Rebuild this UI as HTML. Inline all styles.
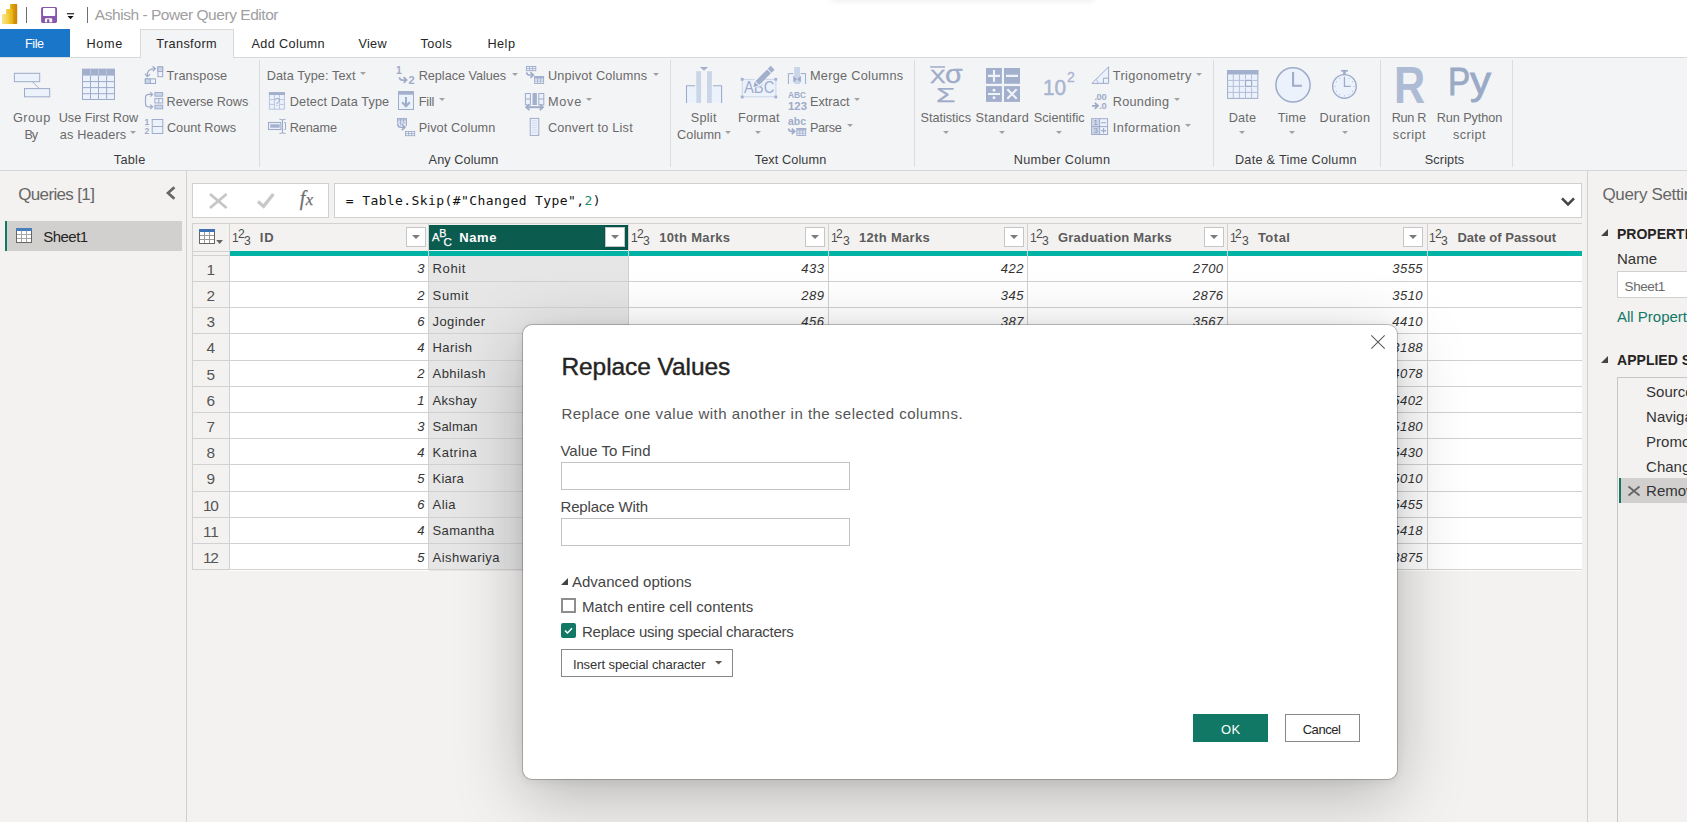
<!DOCTYPE html>
<html><head><meta charset="utf-8"><title>Power Query Editor</title>
<style>
*{box-sizing:border-box;margin:0;padding:0}
html,body{width:1687px;height:822px;overflow:hidden;background:#f3f2f1;font-family:"Liberation Sans",sans-serif}
.a{position:absolute}
.t{position:absolute;white-space:nowrap;line-height:1}
svg{position:absolute;overflow:visible}
.sep{position:absolute;top:60px;width:1px;height:107px;background:#dcdddf}
.dd{position:absolute;width:0;height:0;border-left:3.3px solid transparent;border-right:3.3px solid transparent;border-top:3.2px solid #a2a2a2}
.hb{position:absolute;top:227px;width:20px;height:20px;background:#fff;border:1px solid #c6c6c6}
.hb:after{content:"";position:absolute;left:5px;top:7px;border-left:4px solid transparent;border-right:4px solid transparent;border-top:4px solid #7a7a7a}
</style></head><body>
<!-- title bar + tabs -->
<div class="a" style="left:0;top:0;width:1687px;height:58px;background:#fff"></div>
<div class="a" style="left:0;top:57px;width:1687px;height:1px;background:#d9d9d9"></div>
<div class="a" style="left:830px;top:-8px;width:264px;height:8px;border-radius:4px;box-shadow:0 1px 6px rgba(0,0,0,.08)"></div>
<div class="a" style="left:0;top:29px;width:70px;height:28px;background:#1976c8"></div>
<div class="a" style="left:140px;top:29px;width:94px;height:29px;background:#f3f4f6;border:1px solid #d9d9d9;border-bottom:none"></div>
<div class="a" style="left:26px;top:7px;width:1px;height:16px;background:#6e6e6e"></div>
<div class="a" style="left:87px;top:7px;width:1px;height:16px;background:#6e6e6e"></div>
<!-- ribbon -->
<div class="a" style="left:0;top:58px;width:1687px;height:112px;background:#f3f4f6"></div>
<div class="a" style="left:0;top:170px;width:1687px;height:1px;background:#d6d6d6"></div>
<div class="sep" style="left:259px"></div><div class="sep" style="left:670px"></div><div class="sep" style="left:914px"></div>
<div class="sep" style="left:1213px"></div><div class="sep" style="left:1380px"></div><div class="sep" style="left:1512px"></div>
<!-- panels -->
<div class="a" style="left:186px;top:171px;width:1px;height:651px;background:#d2d0ce"></div>
<div class="a" style="left:1587px;top:171px;width:1px;height:651px;background:#d2d0ce"></div>
<div class="a" style="left:5px;top:221px;width:177px;height:30px;background:#d2d0ce;border-left:2px solid #117865"></div>
<!-- formula bar -->
<div class="a" style="left:192px;top:183px;width:137px;height:35px;background:#fff;border:1px solid #d0d0d0"></div>
<div class="a" style="left:334px;top:183px;width:1248px;height:35px;background:#fff;border:1px solid #d0d0d0"></div>
<div class="a" style="left:192px;top:223px;width:1390px;height:28px;background:#f3f2f1;border-top:1px solid #d1d1d1"></div>
<div class="a" style="left:429px;top:225px;width:199px;height:25px;background:#0b5b4f"></div>
<div class="a" style="left:604px;top:225px;width:24px;height:25px;background:#04554a"></div>
<div class="a" style="left:229.5px;top:251px;width:1352.5px;height:5px;background:#01b3a4"></div>
<div class="a" style="left:229px;top:256px;width:1353px;height:314.8px;background:#fff"></div>
<div class="a" style="left:429px;top:256px;width:199px;height:314.8px;background:#e6e6e6"></div>
<div class="a" style="left:192px;top:251px;width:37px;height:319.8px;background:#f3f2f1"></div>
<div class="a" style="left:192px;top:281px;width:1390px;height:1px;background:#d1d1d1"></div>
<div class="a" style="left:192px;top:307px;width:1390px;height:1px;background:#d1d1d1"></div>
<div class="a" style="left:192px;top:333px;width:1390px;height:1px;background:#d1d1d1"></div>
<div class="a" style="left:192px;top:360px;width:1390px;height:1px;background:#d1d1d1"></div>
<div class="a" style="left:192px;top:386px;width:1390px;height:1px;background:#d1d1d1"></div>
<div class="a" style="left:192px;top:412px;width:1390px;height:1px;background:#d1d1d1"></div>
<div class="a" style="left:192px;top:438px;width:1390px;height:1px;background:#d1d1d1"></div>
<div class="a" style="left:192px;top:464px;width:1390px;height:1px;background:#d1d1d1"></div>
<div class="a" style="left:192px;top:491px;width:1390px;height:1px;background:#d1d1d1"></div>
<div class="a" style="left:192px;top:517px;width:1390px;height:1px;background:#d1d1d1"></div>
<div class="a" style="left:192px;top:543px;width:1390px;height:1px;background:#d1d1d1"></div>
<div class="a" style="left:192px;top:569px;width:1390px;height:1px;background:#d1d1d1"></div>
<div class="a" style="left:192px;top:255px;width:37px;height:1px;background:#d1d1d1"></div>
<div class="a" style="left:192px;top:250.6px;width:37px;height:1px;background:#d1d1d1"></div>
<div class="a" style="left:192px;top:223px;width:1px;height:347px;background:#d1d1d1"></div>
<div class="a" style="left:229px;top:223px;width:1px;height:347px;background:#d1d1d1"></div>
<div class="a" style="left:428px;top:223px;width:1px;height:347px;background:#d1d1d1"></div>
<div class="a" style="left:628px;top:223px;width:1px;height:347px;background:#d1d1d1"></div>
<div class="a" style="left:828px;top:223px;width:1px;height:347px;background:#d1d1d1"></div>
<div class="a" style="left:1027px;top:223px;width:1px;height:347px;background:#d1d1d1"></div>
<div class="a" style="left:1227px;top:223px;width:1px;height:347px;background:#d1d1d1"></div>
<div class="a" style="left:1427px;top:223px;width:1px;height:347px;background:#d1d1d1"></div>
<div class="hb" style="left:405.6px"></div>
<div class="hb" style="left:605.1px"></div>
<div class="hb" style="left:804.6px"></div>
<div class="hb" style="left:1004.2px"></div>
<div class="hb" style="left:1203.7px"></div>
<div class="hb" style="left:1403.2px"></div>
<div class="t" style="left:231.9px;top:230.7px;font-size:13.2px;color:#4d4d4d;transform:scaleX(0.92);transform-origin:0 0">1</div><div class="t" style="left:237.7px;top:226.7px;font-size:13.2px;color:#4d4d4d;transform:scaleX(0.92);transform-origin:0 0">2</div><div class="t" style="left:243.9px;top:233.7px;font-size:13.2px;color:#4d4d4d;transform:scaleX(0.92);transform-origin:0 0">3</div>
<div class="t" style="left:432.1px;top:231.5px;font-size:11.2px;color:#fff;-webkit-text-stroke:0.25px #fff">A</div><div class="t" style="left:439.3px;top:227.6px;font-size:10.7px;color:#fff;-webkit-text-stroke:0.25px #fff">B</div><div class="t" style="left:443.6px;top:236.5px;font-size:11.5px;color:#fff;-webkit-text-stroke:0.25px #fff">C</div>
<div class="t" style="left:630.9px;top:230.7px;font-size:13.2px;color:#4d4d4d;transform:scaleX(0.92);transform-origin:0 0">1</div><div class="t" style="left:636.7px;top:226.7px;font-size:13.2px;color:#4d4d4d;transform:scaleX(0.92);transform-origin:0 0">2</div><div class="t" style="left:642.9px;top:233.7px;font-size:13.2px;color:#4d4d4d;transform:scaleX(0.92);transform-origin:0 0">3</div>
<div class="t" style="left:830.5px;top:230.7px;font-size:13.2px;color:#4d4d4d;transform:scaleX(0.92);transform-origin:0 0">1</div><div class="t" style="left:836.3px;top:226.7px;font-size:13.2px;color:#4d4d4d;transform:scaleX(0.92);transform-origin:0 0">2</div><div class="t" style="left:842.5px;top:233.7px;font-size:13.2px;color:#4d4d4d;transform:scaleX(0.92);transform-origin:0 0">3</div>
<div class="t" style="left:1030.0px;top:230.7px;font-size:13.2px;color:#4d4d4d;transform:scaleX(0.92);transform-origin:0 0">1</div><div class="t" style="left:1035.8px;top:226.7px;font-size:13.2px;color:#4d4d4d;transform:scaleX(0.92);transform-origin:0 0">2</div><div class="t" style="left:1042.0px;top:233.7px;font-size:13.2px;color:#4d4d4d;transform:scaleX(0.92);transform-origin:0 0">3</div>
<div class="t" style="left:1229.5px;top:230.7px;font-size:13.2px;color:#4d4d4d;transform:scaleX(0.92);transform-origin:0 0">1</div><div class="t" style="left:1235.3px;top:226.7px;font-size:13.2px;color:#4d4d4d;transform:scaleX(0.92);transform-origin:0 0">2</div><div class="t" style="left:1241.5px;top:233.7px;font-size:13.2px;color:#4d4d4d;transform:scaleX(0.92);transform-origin:0 0">3</div>
<div class="t" style="left:1429.0px;top:230.7px;font-size:13.2px;color:#4d4d4d;transform:scaleX(0.92);transform-origin:0 0">1</div><div class="t" style="left:1434.8px;top:226.7px;font-size:13.2px;color:#4d4d4d;transform:scaleX(0.92);transform-origin:0 0">2</div><div class="t" style="left:1441.0px;top:233.7px;font-size:13.2px;color:#4d4d4d;transform:scaleX(0.92);transform-origin:0 0">3</div>
<svg style="left:199px;top:229px" width="25" height="15" viewBox="0 0 25 15"><rect x="0.5" y="0.5" width="15" height="14" fill="#fff" stroke="#666"/><rect x="0" y="0" width="16" height="3" fill="#3f72b4"/><path d="M1 6.5h14M1 10.5h14M5.5 3v11M10.5 3v11" stroke="#9a9a9a" stroke-width="1" fill="none"/><path d="M17.2 11h6.8l-3.4 3.9z" fill="#666"/></svg>
<!-- right panel -->
<div class="a" style="left:1617px;top:271px;width:80px;height:27px;background:#fff;border:1px solid #d0d0d0"></div>
<div class="a" style="left:1617px;top:377px;width:80px;height:460px;border:1px solid #c8c6c4"></div>
<div class="a" style="left:1619px;top:478px;width:70px;height:25px;background:#d2d0ce;border-left:2px solid #117865"></div>
<svg style="left:0;top:0" width="1687" height="171" viewBox="0 0 1687 171">
<defs><linearGradient id="g1" x1="0" x2="1"><stop offset="0" stop-color="#eab010"/><stop offset="1" stop-color="#c8800a"/></linearGradient><linearGradient id="g2" x1="0" x2="1"><stop offset="0" stop-color="#f6d140"/><stop offset="1" stop-color="#e8b414"/></linearGradient><linearGradient id="g3" x1="0" x2="1"><stop offset="0" stop-color="#fae58a"/><stop offset="1" stop-color="#f3cd3c"/></linearGradient></defs>
<rect x="10.1" y="4" width="7.1" height="20" rx="0.8" fill="url(#g1)"/><rect x="6.1" y="9" width="6.8" height="15" rx="0.8" fill="url(#g2)"/><rect x="2" y="14" width="7" height="10" rx="0.8" fill="url(#g3)"/>
<rect x="41.1" y="7" width="15.9" height="15.9" rx="1.6" fill="#8856ab"/><rect x="43" y="8" width="12.2" height="8" rx="0.8" fill="#fff"/><path d="M44.9 22.3V19.4q0-1.1 1.1-1.1h5.1q1.1 0 1.1 1.1V22.3H49.3V19.3H47.1V22.3z" fill="#fff"/>
<rect x="67" y="13.2" width="7.1" height="1.1" fill="#111"/><path d="M67.5 16h6.1l-3.05 3.2z" fill="#111"/>
<g fill="#ecf2fc" stroke="#9eabc9" stroke-width="1"><rect x="14.4" y="73.3" width="25.3" height="8.4"/><rect x="24.5" y="88.6" width="25.2" height="8.2"/><path d="M32.4 81.7L39.3 88.6" fill="none"/></g>
<g><rect x="82.5" y="69.3" width="32" height="30.2" fill="#ecf2fc" stroke="#9eabc9"/><rect x="82" y="68.8" width="33" height="6.8" fill="#a3b0cd"/><path d="M82.5 81.6h32M82.5 87.6h32M82.5 93.7h32M90.5 69v30.5M98.5 69v30.5M106.6 69v30.5" stroke="#9eabc9" stroke-width="1" fill="none"/><path d="M90.5 69v6.5M98.5 69v6.5M106.6 69v6.5" stroke="#c3cce0" stroke-width="0.8"/></g>
<g stroke="#9eabc9" fill="none"><rect x="157.9" y="66.9" width="4.8" height="9.8" fill="#ecf2fc"/><rect x="157.9" y="66.9" width="4.8" height="4.6" fill="#cbd5e8"/><rect x="145.3" y="78.9" width="10.2" height="4.6" fill="#ecf2fc"/><rect x="145.3" y="78.9" width="5" height="4.6" fill="#cbd5e8"/><path d="M147.3 76.4C146.6 71.4 149.4 68.6 155 68.6" stroke-width="1.25"/><path d="M145 73.6l2.3 3 2.8-2.4M152.6 66.2l2.8 2.4-2.6 2.6" stroke-width="1.25"/></g>
<g stroke="#9eabc9" fill="none"><rect x="154.9" y="92.6" width="7.8" height="3.6" fill="#cbd5e8"/><rect x="154.9" y="98.6" width="7.8" height="4.4" fill="#ecf2fc"/><path d="M158.8 98.6v4.4"/><rect x="154.9" y="105.2" width="7.8" height="3.6" fill="#cbd5e8"/><path d="M152.3 94.4h-3.4q-3.4 0-3.4 3.4v5.6q0 3.4 3.4 3.4h3.4" stroke-width="1.2"/><path d="M150.2 92.2l2.4 2.2-2.4 2.2M150.2 104.6l2.4 2.2-2.4 2.2" stroke-width="1.2"/></g>
<g stroke="#9eabc9" fill="none"><rect x="152.2" y="119.5" width="10.6" height="14" fill="#ecf2fc"/><path d="M152.2 126.5h10.6"/><path d="M145 126.3h4" stroke-width="0.6" stroke="#cbd5e8"/></g>
<text x="144.6" y="125.2" font-size="8.6" font-weight="bold" fill="#9eabc9" font-family="Liberation Sans, sans-serif">1</text><text x="144.6" y="134.2" font-size="8.6" font-weight="bold" fill="#9eabc9" font-family="Liberation Sans, sans-serif">2</text>
<g><rect x="269.4" y="92.6" width="15" height="16.6" fill="#ecf2fc" stroke="#bac5dc"/><rect x="268.9" y="92.1" width="16" height="2.9" fill="#a3b0cd"/><path d="M269.4 99.6h15M269.4 104.4h15M274.4 95v14.2M279.4 95v14.2" stroke="#bac5dc" fill="none"/><rect x="275" y="98" width="4" height="8" fill="#ecf2fc"/><text x="274.3" y="105.8" font-size="10.4" fill="#9eabc9" font-family="Liberation Sans, sans-serif">?</text></g>
<g stroke="#9eabc9" fill="none"><rect x="268.5" y="122.5" width="12.4" height="7" fill="#ecf2fc" stroke-width="1.1"/><rect x="270.3" y="124.3" width="9.4" height="3.4" fill="#a3b0cd" stroke="none"/><path d="M284.2 122.5h1.3v7h-1.3" stroke-width="1"/><path d="M282.5 120v12.8M279.4 119.3q3.1 0 3.1 1.4q0-1.4 3.1-1.4M279.4 133.5q3.1 0 3.1-1.4q0 1.4 3.1 1.4" stroke-width="1.1"/></g>
<text x="396" y="73.7" font-size="10.4" font-weight="bold" fill="#9eabc9" font-family="Liberation Sans, sans-serif">1</text><text x="408.4" y="84" font-size="11" font-weight="bold" fill="#9eabc9" font-family="Liberation Sans, sans-serif">2</text><path d="M399.4 77.2q0.2 2.9 3 2.9h3.6M403.6 77.2l3 2.9-3 2.9" stroke="#9eabc9" stroke-width="1.7" fill="none"/>
<g><rect x="398.5" y="91.7" width="15" height="17.8" fill="#ecf2fc" stroke="#9eabc9"/><rect x="398" y="91.2" width="16" height="3.5" fill="#a3b0cd"/><path d="M406 97v8.6M402.2 102.2l3.8 4 3.8-4" stroke="#9eabc9" stroke-width="2" fill="none"/></g>
<rect x="397.5" y="118.6" width="9" height="6.8" fill="#ecf2fc" stroke="#9eabc9" stroke-width="0.9"/><rect x="397.05" y="118.14999999999999" width="9.9" height="1.50" fill="#a3b0cd"/><path d="M400.50 118.6v6.8M403.50 118.6v6.8M397.5 120.87h9M397.5 123.13h9" stroke="#9eabc9" stroke-width="0.8" fill="none"/>
<path d="M397.8 123.6Q397.6 127.2 401 127.2H404.4M401.8 124.2l3.2 3-3.2 3" stroke="#f3f4f6" stroke-width="3.4" fill="none"/><path d="M397.8 124Q397.6 127.2 401 127.2H404.6M401.8 124.2l3.2 3-3.2 3" stroke="#9eabc9" stroke-width="1.6" fill="none"/>
<rect x="405.5" y="131.5" width="9.2" height="4.2" fill="#ecf2fc" stroke="#9eabc9" stroke-width="0.9"/><path d="M408.57 131.5v4.2M411.63 131.5v4.2M405.5 133.60h9.2" stroke="#9eabc9" stroke-width="0.8" fill="none"/>
<rect x="526.4" y="66.5" width="9.4" height="4.2" fill="#ecf2fc" stroke="#9eabc9" stroke-width="0.9"/><path d="M529.53 66.5v4.2M532.67 66.5v4.2M526.4 68.60h9.4" stroke="#9eabc9" stroke-width="0.8" fill="none"/>
<path d="M526.6 72.4Q526.8 75 529.6 75H533M530.4 72.2l3 2.8-3 2.8" stroke="#9eabc9" stroke-width="1.6" fill="none"/>
<rect x="534.6" y="76.5" width="9" height="7" fill="#ecf2fc" stroke="#9eabc9" stroke-width="0.9"/><rect x="534.15" y="76.05" width="9.9" height="2.00" fill="#a3b0cd"/><path d="M537.60 76.5v7M540.60 76.5v7M534.6 78.83h9M534.6 81.17h9" stroke="#9eabc9" stroke-width="0.8" fill="none"/>
<g stroke="#9eabc9" fill="#ecf2fc"><rect x="525.4" y="93.5" width="5" height="11.4"/><path d="M525.4 99h5" fill="none"/><rect x="538.8" y="93.5" width="5" height="11.4"/><path d="M538.8 99h5" fill="none"/><rect x="532.5" y="93" width="4.4" height="12" fill="#a3b0cd" stroke="none"/><path d="M527 107.2h15.4" fill="none" stroke-width="2"/><path d="M529.4 104.4l-3.2 2.8 3.2 2.8M539.8 104.4l3.2 2.8-3.2 2.8" fill="none" stroke-width="1.7"/></g>
<g stroke="#9eabc9"><rect x="530.2" y="118.4" width="8.6" height="17" fill="#ecf2fc"/><path d="M531.8 120.8h5.4M531.8 123.1h5.4M531.8 125.4h5.4M531.8 127.7h5.4M531.8 130h5.4M531.8 132.3h5.4" stroke-width="0.8" stroke="#cbd5e8" fill="none"/></g>
<g><rect x="696.2" y="71.2" width="4.9" height="31.8" fill="#cbd5e8"/><rect x="707" y="71.2" width="4.9" height="31.8" fill="#cbd5e8"/><rect x="686.5" y="85.7" width="9.7" height="17.3" fill="#ecf2fc"/><rect x="711.9" y="85.7" width="9.7" height="17.3" fill="#ecf2fc"/><path d="M686.5 103V85.7h8.6M713 85.7h8.6V103" stroke="#9eabc9" fill="none" stroke-width="1.1"/><path d="M699.9 67h8.2l-4.1 3.7z" fill="#a3b0cd"/></g>
<g><rect x="742.3" y="79.4" width="33.6" height="17.4" fill="#ecf2fc" stroke="#cbd5e8"/><g fill="#a3b0cd"><rect x="740.8" y="77.9" width="2.8" height="2.8"/><rect x="774.4" y="77.9" width="2.8" height="2.8"/><rect x="740.8" y="95.6" width="2.8" height="2.8"/><rect x="774.4" y="95.6" width="2.8" height="2.8"/></g></g>
<g stroke="#9eabc9" fill="none"><path d="M788.4 84V73.6h5.2V84z" fill="#ecf2fc" stroke="none"/><path d="M800.4 84V73.6h5.2V84z" fill="#ecf2fc" stroke="none"/><path d="M793.4 73.6h-5V84M800.6 73.6h5V84"/><rect x="794.2" y="67" width="5.8" height="17" fill="#cbd5e8" stroke="none"/><path d="M793.3 75.8v6.8l3.7-3.4zM800.9 75.8v6.8l-3.7-3.4z" fill="#9eabc9" stroke="none"/></g>
<path d="M788.6 128.4q0 3 3 3h3M791.8 128.6l3 2.8-3 2.8" stroke="#9eabc9" stroke-width="1.6" fill="none"/>
<rect x="796.9" y="128.5" width="8.8" height="7" fill="#ecf2fc" stroke="#9eabc9" stroke-width="0.9"/><rect x="796.4499999999999" y="128.05" width="9.700000000000001" height="1.80" fill="#a3b0cd"/><path d="M799.83 128.5v7M802.77 128.5v7M796.9 130.83h8.8M796.9 133.17h8.8" stroke="#9eabc9" stroke-width="0.8" fill="none"/>
<rect x="930.2" y="66.2" width="14.8" height="1.5" fill="#9eabc9"/>
<g fill="#a3b0cd"><rect x="986" y="68" width="15.9" height="15.8"/><rect x="1004" y="68" width="16" height="15.8"/><rect x="986" y="86.1" width="15.9" height="15.8"/><rect x="1004" y="86.1" width="16" height="15.8"/></g><g stroke="#f0f3f8" stroke-width="2.1" fill="none"><path d="M988 75.9h12M994 70v11.8M1006 75.9h12M988 94h12M1007.3 89.3l9.4 9.4M1016.7 89.3l-9.4 9.4"/></g><g fill="#f0f3f8"><circle cx="994" cy="90.2" r="1.45"/><circle cx="994" cy="97.8" r="1.45"/></g>
<g stroke="#9eabc9" fill="#ecf2fc"><path d="M1091.9 83.4L1108.6 66.9V83.4z"/><path d="M1103.4 83.4v-5.2h5.2" fill="none"/><path d="M1096.2 79.4q1.6 1.6 1.8 4" fill="none" stroke-width="0.8"/></g>
<text x="1094.4" y="99.6" font-size="9.4" font-weight="bold" fill="#9eabc9" font-family="Liberation Sans, sans-serif" letter-spacing="-0.4">.00</text><text x="1099.2" y="108.9" font-size="9.4" font-weight="bold" fill="#9eabc9" font-family="Liberation Sans, sans-serif" letter-spacing="-0.4">.0</text><path d="M1092 105.8h5.6M1094.8 102.8l3.2 3-3.2 3" stroke="#9eabc9" stroke-width="1.8" fill="none"/>
<g><rect x="1091.6" y="118.7" width="16" height="15.8" fill="#ecf2fc" stroke="#9eabc9"/><rect x="1092.1" y="119.2" width="7.4" height="14.8" fill="#cbd5e8"/><path d="M1091.6 126.6h16M1099.6 118.7v15.8" stroke="#9eabc9" fill="none"/><text x="1093.4" y="125.4" font-size="7.6" fill="#8896b8" font-family="Liberation Sans, sans-serif">1</text><text x="1093.4" y="133.4" font-size="7.6" fill="#8896b8" font-family="Liberation Sans, sans-serif">3</text><path d="M1101 122.7h5.2M1101 130.6h5.2M1103.6 128v5.2" stroke="#9eabc9" stroke-width="1.1" fill="none"/></g>
<g><rect x="1227.6" y="70.5" width="30.2" height="27.9" fill="#ecf2fc" stroke="#9eabc9"/><rect x="1227.1" y="70" width="31.2" height="4.5" fill="#a3b0cd"/><path d="M1233.3 74.4v24M1239.4 74.4v24M1245.5 74.4v24M1251.6 74.4v24M1227.6 80.4h30.2M1227.6 86.4h30.2M1227.6 92.4h30.2" stroke="#b3bfd8" stroke-width="1" fill="none"/><rect x="1244.4" y="79.3" width="8.3" height="8.2" fill="#ecf2fc"/><rect x="1245.5" y="80.4" width="6.1" height="6" fill="#ecf2fc" stroke="#9eabc9" stroke-width="1.2"/></g>
<g stroke="#9eabc9" fill="none"><circle cx="1293" cy="84.95" r="17.1" fill="#ecf2fc" stroke-width="1.5"/><path d="M1293.1 72V85.8H1301.9" stroke-width="2.1"/></g>
<g stroke="#9eabc9" fill="none"><circle cx="1344.45" cy="86.45" r="11.8" fill="#ecf2fc" stroke-width="1.4"/><path d="M1341.1 70.8h6.8" stroke-width="1.7"/><path d="M1344.45 71v3.6" stroke-width="2.6"/><path d="M1344.45 77.1v9.3h6.3" stroke-width="1.3"/><g fill="#9eabc9" stroke="none"><circle cx="1344.45" cy="77.05" r="0.5"/><circle cx="1349.15" cy="78.31" r="0.5"/><circle cx="1352.59" cy="81.75" r="0.5"/><circle cx="1353.85" cy="86.45" r="0.5"/><circle cx="1352.59" cy="91.15" r="0.5"/><circle cx="1349.15" cy="94.59" r="0.5"/><circle cx="1344.45" cy="95.85" r="0.5"/><circle cx="1339.75" cy="94.59" r="0.5"/><circle cx="1336.31" cy="91.15" r="0.5"/><circle cx="1335.05" cy="86.45" r="0.5"/><circle cx="1336.31" cy="81.75" r="0.5"/><circle cx="1339.75" cy="78.31" r="0.5"/></g></g>
</svg>
<svg style="left:0;top:0;z-index:2" width="800" height="110" viewBox="0 0 800 110"><g transform="translate(753.4 87) rotate(-45)"><path d="M-1.8 0L5.2-4.3H9v8.6H5.2z" fill="#f0f4fc"/><path d="M0 0L4.6-2.7v5.4z" fill="#9eabc9"/><rect x="5.5" y="-2.7" width="16.6" height="5.4" fill="#a3b0cd"/><rect x="23" y="-2.7" width="4.2" height="5.4" fill="#a3b0cd"/></g></svg>
<div class="dd" style="left:130.2px;top:131.4px"></div>
<div class="dd" style="left:359.8px;top:72px"></div>
<div class="dd" style="left:511.5px;top:73px"></div>
<div class="dd" style="left:438.7px;top:98px"></div>
<div class="dd" style="left:652.6px;top:72.5px"></div>
<div class="dd" style="left:585.8px;top:98px"></div>
<div class="dd" style="left:725px;top:131.4px"></div>
<div class="dd" style="left:754.9px;top:131.4px"></div>
<div class="dd" style="left:854px;top:98px"></div>
<div class="dd" style="left:846.8px;top:124px"></div>
<div class="dd" style="left:942.7px;top:131.4px"></div>
<div class="dd" style="left:998.5px;top:131.4px"></div>
<div class="dd" style="left:1055.6px;top:131.4px"></div>
<div class="dd" style="left:1195.8px;top:72.5px"></div>
<div class="dd" style="left:1173.9px;top:98px"></div>
<div class="dd" style="left:1184.7px;top:124px"></div>
<div class="dd" style="left:1238.8px;top:131.4px"></div>
<div class="dd" style="left:1288.8px;top:131.4px"></div>
<div class="dd" style="left:1341.6px;top:131.4px"></div>
<svg style="left:166px;top:185.5px" width="10" height="14" viewBox="0 0 10 14"><path d="M8.4 1.2L2 7l6.4 5.8" stroke="#666" stroke-width="2.7" fill="none"/></svg>
<svg style="left:16px;top:228px" width="16" height="15" viewBox="0 0 16 15"><rect x="0.5" y="0.5" width="15" height="14" fill="#fff" stroke="#666"/><rect x="0" y="0" width="16" height="3" fill="#4a7ebb"/><path d="M1 6.5h14M1 10.5h14M5.5 3v11M10.5 3v11" stroke="#a6a6a6" fill="none"/></svg>
<svg style="left:208.8px;top:193px" width="19" height="16" viewBox="0 0 19 16"><path d="M1 1L17.6 15M17.6 1L1 15" stroke="#c6c6c6" stroke-width="2.9" fill="none"/></svg>
<svg style="left:257px;top:193px" width="18" height="15" viewBox="0 0 18 15"><path d="M1 8.4l5.6 5L16.4 1" stroke="#c8c8c8" stroke-width="3.4" fill="none"/></svg>
<svg style="left:1560.7px;top:196.6px" width="14" height="10" viewBox="0 0 14 10"><path d="M1 1.4l6 6 6-6" stroke="#444" stroke-width="2.5" fill="none"/></svg>
<svg style="left:1627.7px;top:486.3px" width="12" height="10" viewBox="0 0 12 10"><path d="M0.5 0.5L11.5 9.5M11.5 0.5L0.5 9.5" stroke="#666" stroke-width="1.8" fill="none"/></svg>
<svg style="left:1601.2px;top:229.4px" width="7" height="7" viewBox="0 0 7 7"><path d="M7 0V7H0z" fill="#444"/></svg>
<svg style="left:1601.2px;top:355.6px" width="7" height="7" viewBox="0 0 7 7"><path d="M7 0V7H0z" fill="#444"/></svg>
<div class="a" style="left:523px;top:324.5px;width:874px;height:454.5px;background:#fff;border-radius:9px;z-index:5;box-shadow:0 0 0 1px rgba(0,0,0,.22),0 17px 68px rgba(0,0,0,.255),0 2px 12px rgba(0,0,0,.075)"></div>
<svg style="left:1370.5px;top:334.5px;z-index:6" width="14" height="14" viewBox="0 0 14 14"><path d="M0.3 0.3L13.7 13.7M13.7 0.3L0.3 13.7" stroke="#5e5e5e" stroke-width="1.1" fill="none"/></svg>
<div class="a" style="left:561px;top:462px;width:289px;height:28px;background:#fff;border:1px solid #c3c3c3;z-index:6"></div>
<div class="a" style="left:561px;top:518px;width:289px;height:28px;background:#fff;border:1px solid #c3c3c3;z-index:6"></div>
<svg style="left:561px;top:578.3px;z-index:6" width="7" height="7" viewBox="0 0 7 7"><path d="M7 0V7H0z" fill="#444"/></svg>
<div class="a" style="left:561px;top:598px;width:15px;height:15px;background:#fff;border:2px solid #8d8d8d;z-index:6"></div>
<div class="a" style="left:561px;top:623px;width:15px;height:15px;background:#117865;border-radius:2px;z-index:6"></div>
<svg style="left:561px;top:623px;z-index:7" width="15" height="15" viewBox="0 0 15 15"><path d="M4 7.6L6.5 10L11 5.2" stroke="#fff" stroke-width="1.5" fill="none"/></svg>
<div class="a" style="left:561px;top:649px;width:172px;height:28px;background:#fff;border:1px solid #8a8886;z-index:6"></div>
<svg style="left:714.7px;top:661.4px;z-index:7" width="8" height="4" viewBox="0 0 8 4"><path d="M0 0h7.2l-3.6 3.5z" fill="#5a5a5a"/></svg>
<div class="a" style="left:1193px;top:714px;width:75px;height:28px;background:#117865;z-index:6"></div>
<div class="a" style="left:1285px;top:714px;width:75px;height:28px;background:#fff;border:1px solid #8a8886;z-index:6"></div>

<div class="t" id="t0" style="left:94.8px;top:7.0px;font-size:15.5px;color:#a0a0a0;letter-spacing:-0.456px;">Ashish - Power Query Editor</div>
<div class="t" id="t1" style="left:25.0px;top:38.0px;font-size:12.7px;color:#ffffff;letter-spacing:-0.451px;">File</div>
<div class="t" id="t2" style="left:86.4px;top:38.0px;font-size:12.7px;color:#262626;letter-spacing:0.652px;">Home</div>
<div class="t" id="t3" style="left:156.3px;top:38.0px;font-size:12.7px;color:#262626;letter-spacing:0.370px;">Transform</div>
<div class="t" id="t4" style="left:251.4px;top:38.0px;font-size:12.7px;color:#262626;letter-spacing:0.375px;">Add Column</div>
<div class="t" id="t5" style="left:358.4px;top:38.0px;font-size:12.7px;color:#262626;letter-spacing:0.306px;">View</div>
<div class="t" id="t6" style="left:420.4px;top:38.0px;font-size:12.7px;color:#262626;letter-spacing:0.469px;">Tools</div>
<div class="t" id="t7" style="left:487.4px;top:38.0px;font-size:12.7px;color:#262626;letter-spacing:0.502px;">Help</div>
<div class="t" id="t8" style="left:13.0px;top:112.0px;font-size:12.7px;color:#6a6a6a;letter-spacing:0.484px;">Group</div>
<div class="t" id="t9" style="left:24.5px;top:129.0px;font-size:12.7px;color:#6a6a6a;letter-spacing:-1.213px;">By</div>
<div class="t" id="t10" style="left:58.7px;top:112.0px;font-size:12.7px;color:#6a6a6a;letter-spacing:-0.013px;">Use First Row</div>
<div class="t" id="t11" style="left:59.8px;top:129.0px;font-size:12.7px;color:#6a6a6a;letter-spacing:0.168px;">as Headers</div>
<div class="t" id="t12" style="left:166.6px;top:70.0px;font-size:12.7px;color:#6a6a6a;letter-spacing:0.139px;">Transpose</div>
<div class="t" id="t13" style="left:166.6px;top:96.0px;font-size:12.7px;color:#6a6a6a;letter-spacing:-0.073px;">Reverse Rows</div>
<div class="t" id="t14" style="left:166.9px;top:122.0px;font-size:12.7px;color:#6a6a6a;letter-spacing:0.010px;">Count Rows</div>
<div class="t" id="t15" style="left:113.8px;top:154.0px;font-size:12.7px;color:#3b3b3b;letter-spacing:0.264px;">Table</div>
<div class="t" id="t16" style="left:266.7px;top:70.0px;font-size:12.7px;color:#6a6a6a;letter-spacing:0.078px;">Data Type: Text</div>
<div class="t" id="t17" style="left:289.8px;top:96.0px;font-size:12.7px;color:#6a6a6a;letter-spacing:0.100px;">Detect Data Type</div>
<div class="t" id="t18" style="left:289.8px;top:122.0px;font-size:12.7px;color:#6a6a6a;letter-spacing:-0.154px;">Rename</div>
<div class="t" id="t19" style="left:418.7px;top:70.0px;font-size:12.7px;color:#6a6a6a;letter-spacing:-0.034px;">Replace Values</div>
<div class="t" id="t20" style="left:418.7px;top:96.0px;font-size:12.7px;color:#6a6a6a;letter-spacing:-0.173px;">Fill</div>
<div class="t" id="t21" style="left:418.7px;top:122.0px;font-size:12.7px;color:#6a6a6a;letter-spacing:0.104px;">Pivot Column</div>
<div class="t" id="t22" style="left:428.6px;top:154.0px;font-size:12.7px;color:#3b3b3b;letter-spacing:0.077px;">Any Column</div>
<div class="t" id="t23" style="left:547.9px;top:70.0px;font-size:12.7px;color:#6a6a6a;letter-spacing:0.192px;">Unpivot Columns</div>
<div class="t" id="t24" style="left:547.9px;top:96.0px;font-size:12.7px;color:#6a6a6a;letter-spacing:0.756px;">Move</div>
<div class="t" id="t25" style="left:547.9px;top:122.0px;font-size:12.7px;color:#6a6a6a;letter-spacing:0.213px;">Convert to List</div>
<div class="t" id="t26" style="left:690.7px;top:112.0px;font-size:12.7px;color:#6a6a6a;letter-spacing:0.278px;">Split</div>
<div class="t" id="t27" style="left:677.1px;top:129.0px;font-size:12.7px;color:#6a6a6a;letter-spacing:0.056px;">Column</div>
<div class="t" id="t28" style="left:737.9px;top:112.0px;font-size:12.7px;color:#6a6a6a;letter-spacing:0.303px;">Format</div>
<div class="t" id="t29" style="left:809.9px;top:70.0px;font-size:12.7px;color:#6a6a6a;letter-spacing:0.311px;">Merge Columns</div>
<div class="t" id="t30" style="left:809.9px;top:96.0px;font-size:12.7px;color:#6a6a6a;letter-spacing:0.036px;">Extract</div>
<div class="t" id="t31" style="left:809.9px;top:122.0px;font-size:12.7px;color:#6a6a6a;letter-spacing:-0.289px;">Parse</div>
<div class="t" id="t32" style="left:754.8px;top:154.0px;font-size:12.7px;color:#3b3b3b;letter-spacing:0.088px;">Text Column</div>
<div class="t" id="t33" style="left:920.5px;top:112.0px;font-size:12.7px;color:#6a6a6a;letter-spacing:-0.030px;">Statistics</div>
<div class="t" id="t34" style="left:975.6px;top:112.0px;font-size:12.7px;color:#6a6a6a;letter-spacing:0.229px;">Standard</div>
<div class="t" id="t35" style="left:1033.7px;top:112.0px;font-size:12.7px;color:#6a6a6a;letter-spacing:0.024px;">Scientific</div>
<div class="t" id="t36" style="left:1112.8px;top:70.0px;font-size:12.7px;color:#6a6a6a;letter-spacing:0.384px;">Trigonometry</div>
<div class="t" id="t37" style="left:1112.8px;top:96.0px;font-size:12.7px;color:#6a6a6a;letter-spacing:0.267px;">Rounding</div>
<div class="t" id="t38" style="left:1112.8px;top:122.0px;font-size:12.7px;color:#6a6a6a;letter-spacing:0.393px;">Information</div>
<div class="t" id="t39" style="left:1013.7px;top:154.0px;font-size:12.7px;color:#3b3b3b;letter-spacing:0.335px;">Number Column</div>
<div class="t" id="t40" style="left:1228.7px;top:112.0px;font-size:12.7px;color:#6a6a6a;letter-spacing:0.196px;">Date</div>
<div class="t" id="t41" style="left:1277.7px;top:112.0px;font-size:12.7px;color:#6a6a6a;letter-spacing:0.255px;">Time</div>
<div class="t" id="t42" style="left:1319.6px;top:112.0px;font-size:12.7px;color:#6a6a6a;letter-spacing:0.362px;">Duration</div>
<div class="t" id="t43" style="left:1234.9px;top:154.0px;font-size:12.7px;color:#3b3b3b;letter-spacing:0.273px;">Date &amp; Time Column</div>
<div class="t" id="t44" style="left:1391.8px;top:112.0px;font-size:12.7px;color:#6a6a6a;letter-spacing:-0.342px;">Run R</div>
<div class="t" id="t45" style="left:1392.8px;top:129.0px;font-size:12.7px;color:#6a6a6a;letter-spacing:0.497px;">script</div>
<div class="t" id="t46" style="left:1436.7px;top:112.0px;font-size:12.7px;color:#6a6a6a;letter-spacing:-0.079px;">Run Python</div>
<div class="t" id="t47" style="left:1453.0px;top:129.0px;font-size:12.7px;color:#6a6a6a;letter-spacing:0.458px;">script</div>
<div class="t" id="t48" style="left:1424.8px;top:154.0px;font-size:12.7px;color:#3b3b3b;letter-spacing:0.103px;">Scripts</div>
<div class="t" id="t49" style="left:1393.6px;top:59.0px;font-size:52.5px;color:#aebbd4;transform:scaleX(0.8224);transform-origin:0 0;font-weight:bold;">R</div>
<div class="t" id="t50" style="left:1447.5px;top:63.0px;font-size:38px;color:#9aaac6;transform:scaleX(0.8750);transform-origin:0 0;-webkit-text-stroke:0.8px #9aaac6;">P</div>
<div class="t" id="t51" style="left:1469.8px;top:62.0px;font-size:38.8px;color:#9aaac6;transform:scaleX(1.0854);transform-origin:0 0;-webkit-text-stroke:0.8px #9aaac6;">y</div>
<div class="t" id="t52" style="left:1043.3px;top:77.0px;font-size:22.3px;color:#a9b5d0;transform:scaleX(0.9320);transform-origin:0 0;-webkit-text-stroke:0.5px #a9b5d0;">10</div>
<div class="t" id="t53" style="left:1066.9px;top:70.0px;font-size:14px;color:#a9b5d0;-webkit-text-stroke:0.3px #a9b5d0;">2</div>
<div class="t" id="t54" style="left:788.3px;top:91.0px;font-size:9px;color:#9eabc9;transform:scaleX(0.9283);transform-origin:0 0;font-weight:bold;">ABC</div>
<div class="t" id="t55" style="left:787.6px;top:101.0px;font-size:11px;color:#9eabc9;transform:scaleX(1.0329);transform-origin:0 0;font-weight:bold;">123</div>
<div class="t" id="t56" style="left:787.6px;top:117.0px;font-size:10px;color:#9eabc9;transform:scaleX(1.0410);transform-origin:0 0;font-weight:bold;">abc</div>
<div class="t" id="t57" style="left:744.4px;top:79.0px;font-size:16.3px;color:#9eabc9;transform:scaleX(0.9075);transform-origin:0 0;">ABC</div>
<div class="t" id="t58" style="left:929.9px;top:67.0px;font-size:19px;color:#9eabc9;transform:scaleX(1.2241);transform-origin:0 0;-webkit-text-stroke:0.35px #9eabc9;">X</div>
<div class="t" id="t59" style="left:945.2px;top:62.0px;font-size:25px;color:#9eabc9;transform:scaleX(1.1460);transform-origin:0 0;-webkit-text-stroke:0.35px #9eabc9;">σ</div>
<div class="t" id="t60" style="left:935.6px;top:86.0px;font-size:19.5px;color:#9eabc9;transform:scaleX(1.6119);transform-origin:0 0;-webkit-text-stroke:0.25px #9eabc9;">Σ</div>
<div class="t" id="t61" style="left:18.2px;top:186.0px;font-size:17px;color:#666666;letter-spacing:-0.646px;">Queries [1]</div>
<div class="t" id="t62" style="left:43.3px;top:229.0px;font-size:15px;color:#252423;letter-spacing:-0.549px;">Sheet1</div>
<div class="t" id="t63" style="left:345.7px;top:194.0px;font-size:13px;color:#111111;font-family:'DejaVu Sans Mono', 'Liberation Mono', monospace;letter-spacing:0.409px;">= Table.Skip(#&quot;Changed Type&quot;,<span style="color:#1a8a6e">2</span>)</div>
<div class="t" id="t64" style="left:299.7px;top:188.0px;font-size:20px;color:#6e6e6e;font-family:'Liberation Serif', serif;font-style:italic;-webkit-text-stroke:0.25px #6e6e6e;letter-spacing:0.6px;">f<span style="font-size:16.5px">x</span></div>
<div class="t" id="t65" style="left:1602.5px;top:186.0px;font-size:17px;color:#666666;letter-spacing:-0.35px;">Query Settings</div>
<div class="t" id="t66" style="left:1617.0px;top:227.0px;font-size:14px;color:#252423;font-weight:bold;">PROPERTIES</div>
<div class="t" id="t67" style="left:1617.0px;top:251.0px;font-size:15px;color:#333333;">Name</div>
<div class="t" id="t68" style="left:1624.6px;top:280.0px;font-size:13.5px;color:#6a6a6a;letter-spacing:-0.419px;">Sheet1</div>
<div class="t" id="t69" style="left:1617.0px;top:309.0px;font-size:15px;color:#117865;">All Properties</div>
<div class="t" id="t70" style="left:1617.1px;top:353.0px;font-size:14px;color:#252423;font-weight:bold;">APPLIED STEPS</div>
<div class="t" id="t71" style="left:1646.1px;top:384.0px;font-size:15px;color:#333333;">Source</div>
<div class="t" id="t72" style="left:1646.1px;top:409.0px;font-size:15px;color:#333333;">Navigation</div>
<div class="t" id="t73" style="left:1646.1px;top:434.0px;font-size:15px;color:#333333;">Promoted Headers</div>
<div class="t" id="t74" style="left:1646.1px;top:459.0px;font-size:15px;color:#333333;">Changed Type</div>
<div class="t" id="t75" style="left:1646.1px;top:483.0px;font-size:15px;color:#333333;">Removed Top Rows</div>
<div class="t" id="t76" style="left:561.4px;top:355.0px;font-size:24.5px;color:#252423;letter-spacing:-0.069px;-webkit-text-stroke:0.4px #252423;z-index:6;">Replace Values</div>
<div class="t" id="t77" style="left:561.4px;top:406.0px;font-size:15px;color:#555555;letter-spacing:0.481px;z-index:6;">Replace one value with another in the selected columns.</div>
<div class="t" id="t78" style="left:560.5px;top:443.0px;font-size:15px;color:#454545;letter-spacing:-0.029px;z-index:6;">Value To Find</div>
<div class="t" id="t79" style="left:560.5px;top:499.0px;font-size:15px;color:#454545;letter-spacing:-0.155px;z-index:6;">Replace With</div>
<div class="t" id="t80" style="left:571.9px;top:574.0px;font-size:15px;color:#454545;letter-spacing:0.029px;z-index:6;">Advanced options</div>
<div class="t" id="t81" style="left:582.0px;top:599.0px;font-size:15px;color:#454545;letter-spacing:0.048px;z-index:6;">Match entire cell contents</div>
<div class="t" id="t82" style="left:582.0px;top:624.0px;font-size:15px;color:#454545;letter-spacing:-0.272px;z-index:6;">Replace using special characters</div>
<div class="t" id="t83" style="left:572.9px;top:658.0px;font-size:13px;color:#333333;letter-spacing:-0.079px;z-index:6;">Insert special character</div>
<div class="t" id="t84" style="left:1221.1px;top:723.0px;font-size:13px;color:#ffffff;letter-spacing:0.403px;z-index:6;">OK</div>
<div class="t" id="t85" style="left:1302.7px;top:723.0px;font-size:13px;color:#252423;letter-spacing:-0.454px;z-index:6;">Cancel</div>
<div class="t" id="t86" style="left:259.7px;top:231.0px;font-size:13px;color:#5c5c5c;letter-spacing:1.000px;font-weight:bold;">ID</div>
<div class="t" id="t87" style="left:459.2px;top:231.0px;font-size:13px;color:#ffffff;letter-spacing:0.593px;font-weight:bold;">Name</div>
<div class="t" id="t88" style="left:659.2px;top:231.0px;font-size:13px;color:#5c5c5c;letter-spacing:0.331px;font-weight:bold;">10th Marks</div>
<div class="t" id="t89" style="left:858.9px;top:231.0px;font-size:13px;color:#5c5c5c;letter-spacing:0.331px;font-weight:bold;">12th Marks</div>
<div class="t" id="t90" style="left:1058.0px;top:231.0px;font-size:13px;color:#5c5c5c;letter-spacing:0.211px;font-weight:bold;">Graduation Marks</div>
<div class="t" id="t91" style="left:1257.9px;top:231.0px;font-size:13px;color:#5c5c5c;letter-spacing:0.502px;font-weight:bold;">Total</div>
<div class="t" id="t92" style="left:1457.4px;top:231.0px;font-size:13px;color:#5c5c5c;letter-spacing:0.032px;font-weight:bold;">Date of Passout</div>
<div class="t" id="t93" style="left:206.6px;top:262.0px;font-size:15.4px;color:#555555;">1</div>
<div class="t" id="t94" style="left:432.6px;top:262.0px;font-size:13px;color:#333333;letter-spacing:0.585px;">Rohit</div>
<div class="t" id="t95" style="left:417.2px;top:262.0px;font-size:13px;color:#333333;font-style:italic;">3</div>
<div class="t" id="t96" style="left:801.2px;top:262.0px;font-size:13px;color:#333333;letter-spacing:0.548px;font-style:italic;">433</div>
<div class="t" id="t97" style="left:1000.8px;top:262.0px;font-size:13px;color:#333333;letter-spacing:0.548px;font-style:italic;">422</div>
<div class="t" id="t98" style="left:1192.8px;top:262.0px;font-size:13px;color:#333333;letter-spacing:0.459px;font-style:italic;">2700</div>
<div class="t" id="t99" style="left:1392.3px;top:262.0px;font-size:13px;color:#333333;letter-spacing:0.459px;font-style:italic;">3555</div>
<div class="t" id="t100" style="left:206.6px;top:288.0px;font-size:15.4px;color:#555555;">2</div>
<div class="t" id="t101" style="left:432.6px;top:289.0px;font-size:13px;color:#333333;letter-spacing:0.641px;">Sumit</div>
<div class="t" id="t102" style="left:417.2px;top:289.0px;font-size:13px;color:#333333;font-style:italic;">2</div>
<div class="t" id="t103" style="left:801.2px;top:289.0px;font-size:13px;color:#333333;letter-spacing:0.548px;font-style:italic;">289</div>
<div class="t" id="t104" style="left:1000.8px;top:289.0px;font-size:13px;color:#333333;letter-spacing:0.548px;font-style:italic;">345</div>
<div class="t" id="t105" style="left:1192.8px;top:289.0px;font-size:13px;color:#333333;letter-spacing:0.459px;font-style:italic;">2876</div>
<div class="t" id="t106" style="left:1392.3px;top:289.0px;font-size:13px;color:#333333;letter-spacing:0.459px;font-style:italic;">3510</div>
<div class="t" id="t107" style="left:206.6px;top:314.0px;font-size:15.4px;color:#555555;">3</div>
<div class="t" id="t108" style="left:432.6px;top:315.0px;font-size:13px;color:#333333;letter-spacing:0.361px;">Joginder</div>
<div class="t" id="t109" style="left:417.2px;top:315.0px;font-size:13px;color:#333333;font-style:italic;">6</div>
<div class="t" id="t110" style="left:801.2px;top:315.0px;font-size:13px;color:#333333;letter-spacing:0.548px;font-style:italic;">456</div>
<div class="t" id="t111" style="left:1000.8px;top:315.0px;font-size:13px;color:#333333;letter-spacing:0.548px;font-style:italic;">387</div>
<div class="t" id="t112" style="left:1192.8px;top:315.0px;font-size:13px;color:#333333;letter-spacing:0.459px;font-style:italic;">3567</div>
<div class="t" id="t113" style="left:1392.3px;top:315.0px;font-size:13px;color:#333333;letter-spacing:0.459px;font-style:italic;">4410</div>
<div class="t" id="t114" style="left:206.6px;top:340.0px;font-size:15.4px;color:#555555;">4</div>
<div class="t" id="t115" style="left:432.6px;top:341.0px;font-size:13px;color:#333333;letter-spacing:0.384px;">Harish</div>
<div class="t" id="t116" style="left:417.2px;top:341.0px;font-size:13px;color:#333333;font-style:italic;">4</div>
<div class="t" id="t117" style="left:801.2px;top:341.0px;font-size:13px;color:#333333;letter-spacing:0.548px;font-style:italic;">398</div>
<div class="t" id="t118" style="left:1000.8px;top:341.0px;font-size:13px;color:#333333;letter-spacing:0.548px;font-style:italic;">402</div>
<div class="t" id="t119" style="left:1192.8px;top:341.0px;font-size:13px;color:#333333;letter-spacing:0.459px;font-style:italic;">2388</div>
<div class="t" id="t120" style="left:1392.3px;top:341.0px;font-size:13px;color:#333333;letter-spacing:0.459px;font-style:italic;">3188</div>
<div class="t" id="t121" style="left:206.6px;top:367.0px;font-size:15.4px;color:#555555;">5</div>
<div class="t" id="t122" style="left:432.6px;top:367.0px;font-size:13px;color:#333333;letter-spacing:0.418px;">Abhilash</div>
<div class="t" id="t123" style="left:417.2px;top:367.0px;font-size:13px;color:#333333;font-style:italic;">2</div>
<div class="t" id="t124" style="left:801.2px;top:367.0px;font-size:13px;color:#333333;letter-spacing:0.548px;font-style:italic;">412</div>
<div class="t" id="t125" style="left:1000.8px;top:367.0px;font-size:13px;color:#333333;letter-spacing:0.548px;font-style:italic;">366</div>
<div class="t" id="t126" style="left:1192.8px;top:367.0px;font-size:13px;color:#333333;letter-spacing:0.459px;font-style:italic;">3300</div>
<div class="t" id="t127" style="left:1392.3px;top:367.0px;font-size:13px;color:#333333;letter-spacing:0.459px;font-style:italic;">4078</div>
<div class="t" id="t128" style="left:206.6px;top:393.0px;font-size:15.4px;color:#555555;">6</div>
<div class="t" id="t129" style="left:432.6px;top:394.0px;font-size:13px;color:#333333;letter-spacing:0.292px;">Akshay</div>
<div class="t" id="t130" style="left:417.2px;top:394.0px;font-size:13px;color:#333333;font-style:italic;">1</div>
<div class="t" id="t131" style="left:801.2px;top:394.0px;font-size:13px;color:#333333;letter-spacing:0.548px;font-style:italic;">377</div>
<div class="t" id="t132" style="left:1000.8px;top:394.0px;font-size:13px;color:#333333;letter-spacing:0.548px;font-style:italic;">425</div>
<div class="t" id="t133" style="left:1192.8px;top:394.0px;font-size:13px;color:#333333;letter-spacing:0.459px;font-style:italic;">4600</div>
<div class="t" id="t134" style="left:1392.3px;top:394.0px;font-size:13px;color:#333333;letter-spacing:0.459px;font-style:italic;">5402</div>
<div class="t" id="t135" style="left:206.6px;top:419.0px;font-size:15.4px;color:#555555;">7</div>
<div class="t" id="t136" style="left:432.6px;top:420.0px;font-size:13px;color:#333333;letter-spacing:0.184px;">Salman</div>
<div class="t" id="t137" style="left:417.2px;top:420.0px;font-size:13px;color:#333333;font-style:italic;">3</div>
<div class="t" id="t138" style="left:801.2px;top:420.0px;font-size:13px;color:#333333;letter-spacing:0.548px;font-style:italic;">405</div>
<div class="t" id="t139" style="left:1000.8px;top:420.0px;font-size:13px;color:#333333;letter-spacing:0.548px;font-style:italic;">375</div>
<div class="t" id="t140" style="left:1192.8px;top:420.0px;font-size:13px;color:#333333;letter-spacing:0.459px;font-style:italic;">4400</div>
<div class="t" id="t141" style="left:1392.3px;top:420.0px;font-size:13px;color:#333333;letter-spacing:0.459px;font-style:italic;">5180</div>
<div class="t" id="t142" style="left:206.6px;top:445.0px;font-size:15.4px;color:#555555;">8</div>
<div class="t" id="t143" style="left:432.6px;top:446.0px;font-size:13px;color:#333333;letter-spacing:0.499px;">Katrina</div>
<div class="t" id="t144" style="left:417.2px;top:446.0px;font-size:13px;color:#333333;font-style:italic;">4</div>
<div class="t" id="t145" style="left:801.2px;top:446.0px;font-size:13px;color:#333333;letter-spacing:0.548px;font-style:italic;">441</div>
<div class="t" id="t146" style="left:1000.8px;top:446.0px;font-size:13px;color:#333333;letter-spacing:0.548px;font-style:italic;">389</div>
<div class="t" id="t147" style="left:1192.8px;top:446.0px;font-size:13px;color:#333333;letter-spacing:0.459px;font-style:italic;">4600</div>
<div class="t" id="t148" style="left:1392.3px;top:446.0px;font-size:13px;color:#333333;letter-spacing:0.459px;font-style:italic;">5430</div>
<div class="t" id="t149" style="left:206.6px;top:471.0px;font-size:15.4px;color:#555555;">9</div>
<div class="t" id="t150" style="left:432.6px;top:472.0px;font-size:13px;color:#333333;letter-spacing:0.185px;">Kiara</div>
<div class="t" id="t151" style="left:417.2px;top:472.0px;font-size:13px;color:#333333;font-style:italic;">5</div>
<div class="t" id="t152" style="left:801.2px;top:472.0px;font-size:13px;color:#333333;letter-spacing:0.548px;font-style:italic;">390</div>
<div class="t" id="t153" style="left:1000.8px;top:472.0px;font-size:13px;color:#333333;letter-spacing:0.548px;font-style:italic;">420</div>
<div class="t" id="t154" style="left:1192.8px;top:472.0px;font-size:13px;color:#333333;letter-spacing:0.459px;font-style:italic;">4200</div>
<div class="t" id="t155" style="left:1392.3px;top:472.0px;font-size:13px;color:#333333;letter-spacing:0.459px;font-style:italic;">5010</div>
<div class="t" id="t156" style="left:202.9px;top:498.0px;font-size:15.4px;color:#555555;letter-spacing:-1.125px;">10</div>
<div class="t" id="t157" style="left:432.6px;top:498.0px;font-size:13px;color:#333333;letter-spacing:0.438px;">Alia</div>
<div class="t" id="t158" style="left:417.2px;top:498.0px;font-size:13px;color:#333333;font-style:italic;">6</div>
<div class="t" id="t159" style="left:801.2px;top:498.0px;font-size:13px;color:#333333;letter-spacing:0.548px;font-style:italic;">428</div>
<div class="t" id="t160" style="left:1000.8px;top:498.0px;font-size:13px;color:#333333;letter-spacing:0.548px;font-style:italic;">427</div>
<div class="t" id="t161" style="left:1192.8px;top:498.0px;font-size:13px;color:#333333;letter-spacing:0.459px;font-style:italic;">4600</div>
<div class="t" id="t162" style="left:1392.3px;top:498.0px;font-size:13px;color:#333333;letter-spacing:0.459px;font-style:italic;">5455</div>
<div class="t" id="t163" style="left:202.9px;top:524.0px;font-size:15.4px;color:#555555;letter-spacing:0.016px;">11</div>
<div class="t" id="t164" style="left:432.6px;top:524.0px;font-size:13px;color:#333333;letter-spacing:0.348px;">Samantha</div>
<div class="t" id="t165" style="left:417.2px;top:524.0px;font-size:13px;color:#333333;font-style:italic;">4</div>
<div class="t" id="t166" style="left:801.2px;top:524.0px;font-size:13px;color:#333333;letter-spacing:0.548px;font-style:italic;">436</div>
<div class="t" id="t167" style="left:1000.8px;top:524.0px;font-size:13px;color:#333333;letter-spacing:0.548px;font-style:italic;">382</div>
<div class="t" id="t168" style="left:1192.8px;top:524.0px;font-size:13px;color:#333333;letter-spacing:0.459px;font-style:italic;">4600</div>
<div class="t" id="t169" style="left:1392.3px;top:524.0px;font-size:13px;color:#333333;letter-spacing:0.459px;font-style:italic;">5418</div>
<div class="t" id="t170" style="left:202.9px;top:550.0px;font-size:15.4px;color:#555555;letter-spacing:-1.125px;">12</div>
<div class="t" id="t171" style="left:432.6px;top:551.0px;font-size:13px;color:#333333;letter-spacing:0.438px;">Aishwariya</div>
<div class="t" id="t172" style="left:417.2px;top:551.0px;font-size:13px;color:#333333;font-style:italic;">5</div>
<div class="t" id="t173" style="left:801.2px;top:551.0px;font-size:13px;color:#333333;letter-spacing:0.548px;font-style:italic;">301</div>
<div class="t" id="t174" style="left:1000.8px;top:551.0px;font-size:13px;color:#333333;letter-spacing:0.548px;font-style:italic;">374</div>
<div class="t" id="t175" style="left:1192.8px;top:551.0px;font-size:13px;color:#333333;letter-spacing:0.459px;font-style:italic;">3200</div>
<div class="t" id="t176" style="left:1392.3px;top:551.0px;font-size:13px;color:#333333;letter-spacing:0.459px;font-style:italic;">3875</div>
</body></html>
